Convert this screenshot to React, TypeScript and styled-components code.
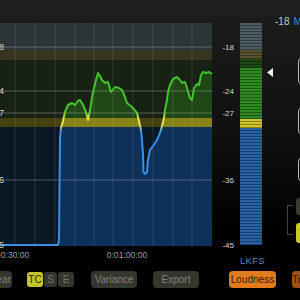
import React from 'react';
import styled, { createGlobalStyle } from 'styled-components';

const GlobalStyle = createGlobalStyle`
  html, body {
    margin: 0;
    padding: 0;
    background: #000;
  }
  body {
    font-family: "Liberation Sans", Arial, sans-serif;
  }
`;

const Screen = styled.div`
  width: 300px;
  height: 300px;
  overflow: hidden;
  display: flex;
  flex-direction: column;
  background: linear-gradient(180deg, #202020 0%, #1b1b1b 8%, #101010 45%, #000 78%);
`;

const MainRow = styled.div`
  display: flex;
  height: 263px;
`;

const ChartCol = styled.div`
  width: 212px;
  flex: none;
  padding-top: 23px;
  svg {
    display: block;
    overflow: visible;
  }
`;

const MeterCol = styled.div`
  width: 62px;
  flex: none;
  padding-top: 23px;
  display: flex;
  flex-direction: column;
  svg {
    display: block;
    overflow: visible;
  }
`;

const UnitLabel = styled.div`
  margin: 9px 0 0 28px;
  width: 22px;
  text-align: center;
  font-size: 9.5px;
  letter-spacing: 0.3px;
  color: #5b86b6;
`;

const SidePanel = styled.div`
  width: 26px;
  flex: none;
  padding-top: 16px;
  display: flex;
  flex-direction: column;
  overflow: hidden;
`;

const SideHeader = styled.div`
  margin-left: 1px;
  font-size: 10px;
  color: #c8c8c8;
  white-space: nowrap;
  span {
    color: #2f8fd0;
    margin-left: 4px;
  }
`;

const SideBox = styled.div<{ $h: number; $top: number }>`
  margin: ${p => p.$top}px 0 0 24px;
  width: 40px;
  height: ${p => p.$h}px;
  flex: none;
  box-sizing: border-box;
  border: 1.5px solid #b8b8b8;
  border-radius: 6px;
`;

const SelectRow = styled.div`
  display: flex;
  margin-top: 15px;
  height: 50px;
  flex: none;
`;

const Bracket = styled.div`
  flex: none;
  margin: 7px 0 0 13px;
  width: 6px;
  height: 30px;
  box-sizing: border-box;
  border: 1.5px solid #34445a;
  border-right: none;
`;

const Swatches = styled.div`
  flex: none;
  margin-left: 3px;
  display: flex;
  flex-direction: column;
  gap: 8px;
`;

const Swatch = styled.div<{ $color: string; $h: number }>`
  width: 14px;
  height: ${p => p.$h}px;
  border-radius: 3px;
  background: ${p => p.$color};
`;

const SideLabel = styled.div`
  margin: 13px 0 0 16px;
  font-size: 10.5px;
  color: #cfcfcf;
`;

const ButtonRow = styled.div`
  display: flex;
  align-items: center;
  margin: 8px 0 0 -18px;
  height: 17px;
`;

const Button = styled.div<{ $variant?: 'dark' | 'orange' | 'rust'; $w: number; $gap: number; $end?: boolean }>`
  flex: none;
  box-sizing: border-box;
  width: ${p => p.$w}px;
  height: 17px;
  margin-right: ${p => p.$gap}px;
  padding-right: ${p => (p.$end ? 1 : 0)}px;
  border-radius: 4px;
  display: flex;
  align-items: center;
  justify-content: ${p => (p.$end ? 'flex-end' : 'center')};
  font-size: 10px;
  white-space: nowrap;
  overflow: hidden;
  background: ${p => (p.$variant === 'orange' ? '#e27b1b' : p.$variant === 'rust' ? '#9c5419' : '#35372f')};
  color: ${p => (p.$variant === 'orange' ? '#3a1c02' : p.$variant === 'rust' ? '#2e1602' : '#7f8279')};
`;

const Segmented = styled.div`
  display: flex;
  gap: 1px;
  margin-right: 17px;
`;

const SegButton = styled.div<{ $active?: boolean; $w: number }>`
  width: ${p => p.$w}px;
  height: 15px;
  border-radius: 3px;
  display: flex;
  align-items: center;
  justify-content: center;
  font-size: 10px;
  background: ${p => (p.$active ? '#c5c42a' : '#33352f')};
  color: ${p => (p.$active ? '#2b2a0c' : '#72756c')};
`;

// curve traced in screen coords, shifted into chart space below
const trace: [number, number][] = [
  [0, 245], [58, 245], [59, 240], [60, 138], [61, 128], [63, 121], [65, 112], [68, 105], [72, 103],
  [75, 105], [78, 101], [80, 100], [83, 105], [86, 112], [88, 120], [90, 110], [93, 92], [96, 80],
  [98, 73], [100, 76], [102, 80], [105, 83], [108, 82], [111, 92], [115, 87], [119, 88], [122, 90],
  [125, 97], [127, 103], [132, 107], [137, 113], [139, 121], [141, 130], [142, 140], [143, 155],
  [143.5, 172], [145, 174], [147, 172], [148, 160], [150, 150], [153, 146], [157, 140], [160, 133],
  [162, 126], [164, 118], [165, 110], [167, 100], [168, 92], [170, 85], [173, 79], [177, 77],
  [180, 80], [182, 83], [185, 82], [187, 88], [190, 98], [192, 100], [194, 88], [197, 84], [199, 85],
  [201, 75], [203, 72], [206, 73], [209, 72], [212, 74],
];

const pts = trace.map(([x, y]) => [x, y - 23]);
const linePath = pts.map(([x, y], i) => `${i ? 'L' : 'M'}${x},${y}`).join(' ');
const fillPath = `${linePath} L212,223 L0,223 Z`;

const vLines = [15, 35, 55, 75, 94, 113, 133, 153, 173, 192];
const scale = [
  { label: '-18', y: 24 },
  { label: '-24', y: 68 },
  { label: '-27', y: 90 },
  { label: '-36', y: 157 },
  { label: '-45', y: 222 },
];

const Chart: React.FC = () => (
  <svg width={212} height={240} viewBox="0 0 212 240">
    <defs>
      <linearGradient id="stroke" gradientUnits="userSpaceOnUse" x1="0" y1="0" x2="0" y2="223">
        <stop offset="0" stopColor="#3dbd2c" />
        <stop offset="0.395" stopColor="#46c230" />
        <stop offset="0.43" stopColor="#ece33e" />
        <stop offset="0.455" stopColor="#e8e25a" />
        <stop offset="0.49" stopColor="#3a90e4" />
        <stop offset="1" stopColor="#3a90e4" />
      </linearGradient>
      <linearGradient id="fill" gradientUnits="userSpaceOnUse" x1="0" y1="0" x2="0" y2="223">
        <stop offset="0" stopColor="rgba(50,150,30,0.32)" />
        <stop offset="0.425" stopColor="rgba(50,150,30,0.32)" />
        <stop offset="0.427" stopColor="rgba(200,195,30,0.5)" />
        <stop offset="0.464" stopColor="rgba(200,195,30,0.5)" />
        <stop offset="0.467" stopColor="rgba(20,90,180,0.38)" />
        <stop offset="1" stopColor="rgba(20,90,180,0.38)" />
      </linearGradient>
    </defs>
    <rect x={0} y={0} width={212} height={27} fill="#2b3538" />
    <rect x={0} y={27} width={212} height={10} fill="#37351e" />
    <rect x={0} y={37} width={212} height={58} fill="#172213" />
    <rect x={0} y={95} width={212} height={9} fill="#444210" />
    <rect x={0} y={104} width={212} height={119} fill="#0a1725" />
    <path d={fillPath} fill="url(#fill)" />
    {vLines.map(x => (
      <line key={x} x1={x} y1={0} x2={x} y2={223} stroke="rgba(210,220,220,0.14)" strokeWidth={1} />
    ))}
    {scale.slice(0, 4).map(s => (
      <line key={s.label} x1={0} y1={s.y} x2={212} y2={s.y} stroke="rgba(225,225,225,0.3)" strokeWidth={1} />
    ))}
    <path d={linePath} fill="none" stroke="url(#stroke)" strokeWidth={2} strokeLinejoin="round" />
    {scale.map(s => (
      <text key={s.label} x={4} y={s.y + 3} textAnchor="end" fontSize={9} fill="#d0d0d0"
        fontFamily='"Liberation Sans", Arial, sans-serif'>{s.label}</text>
    ))}
    <text x={9} y={235} textAnchor="middle" fontSize={8.6} fill="#9c9c9c"
      fontFamily='"Liberation Sans", Arial, sans-serif'>0:00:30:00</text>
    <text x={127} y={235} textAnchor="middle" fontSize={8.6} fill="#9c9c9c"
      fontFamily='"Liberation Sans", Arial, sans-serif'>0:01:00:00</text>
  </svg>
);

// meter segment colour by screen y
const segColor = (gy: number): [string, string] => {
  if (gy < 50) return ['#4c5c60', '#2f3b3d'];
  if (gy < 58) return ['#5a5131', '#3a341f'];
  if (gy < 68) return ['#1d4716', '#12300e'];
  if (gy < 118) return ['#2e8a20', '#1d5a14'];
  if (gy < 127) return ['#d0c52a', '#8a8018'];
  return ['#2b5fa6', '#1a3d6e'];
};

const segments = Array.from({ length: 74 }, (_, i) => i * 3);

const Meter: React.FC = () => (
  <svg width={62} height={223} viewBox="0 0 62 223">
    {segments.map(y => {
      const [main, dark] = segColor(y + 23);
      return (
        <g key={y}>
          <rect x={28} y={y} width={22} height={2} fill={main} />
          <rect x={28} y={y + 2} width={22} height={1} fill={dark} />
        </g>
      );
    })}
    {scale.map(s => (
      <text key={s.label} x={22} y={s.y + 3} textAnchor="end" fontSize={8} fill="#d6d6d6"
        fontFamily='"Liberation Sans", Arial, sans-serif'>{s.label}</text>
    ))}
    <polygon points="55,49.5 61,45 61,54" fill="#f2f2f2" />
  </svg>
);

const App: React.FC = () => (
  <>
    <GlobalStyle />
    <Screen>
      <MainRow>
        <ChartCol>
          <Chart />
        </ChartCol>
        <MeterCol>
          <Meter />
          <UnitLabel>LKFS</UnitLabel>
        </MeterCol>
        <SidePanel>
          <SideHeader>-18<span>M</span></SideHeader>
          <SideBox $top={29} $h={30} />
          <SideBox $top={20} $h={30} />
          <SideBox $top={20} $h={27} />
          <SelectRow>
            <Bracket />
            <Swatches>
              <Swatch $color="#3a3c30" $h={17} />
              <Swatch $color="#c9c72a" $h={20} />
            </Swatches>
          </SelectRow>
          <SideLabel>N</SideLabel>
        </SidePanel>
      </MainRow>
      <ButtonRow>
        <Button $w={30} $gap={15} $end>Clear</Button>
        <Segmented>
          <SegButton $active $w={16}>TC</SegButton>
          <SegButton $w={13}>S</SegButton>
          <SegButton $w={16}>E</SegButton>
        </Segmented>
        <Button $w={46} $gap={16}>Variance</Button>
        <Button $w={46} $gap={30}>Export</Button>
        <Button $variant="orange" $w={47} $gap={16}>Loudness</Button>
        <Button $variant="rust" $w={46} $gap={0}>True Peak</Button>
      </ButtonRow>
    </Screen>
  </>
);

export default App;
